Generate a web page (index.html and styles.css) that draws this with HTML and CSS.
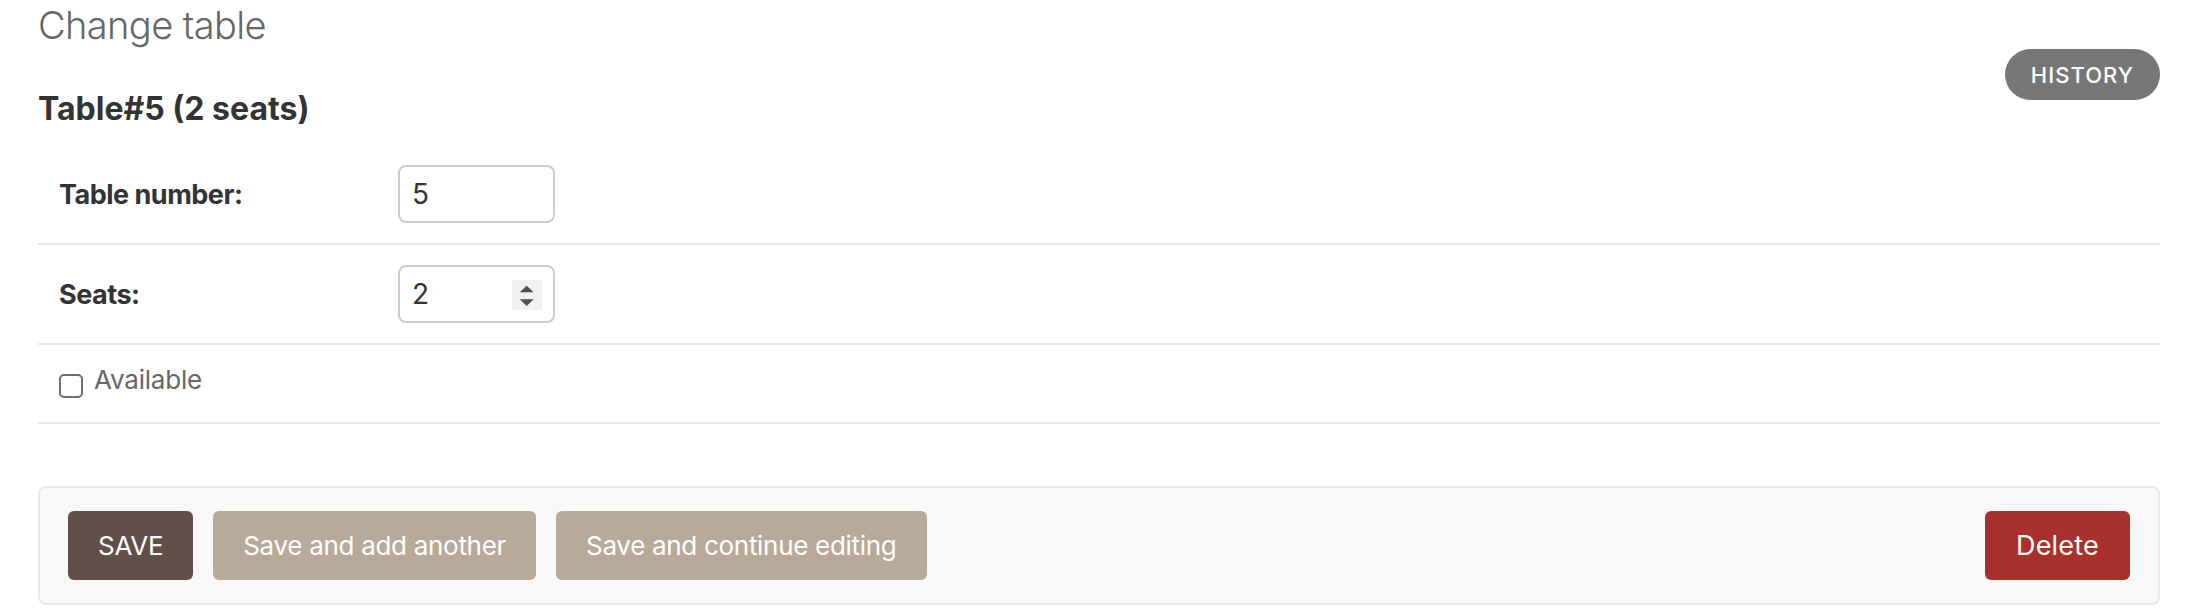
FILE: index.html
```html
<!DOCTYPE html>
<html lang="en">
<head>
<meta charset="utf-8">
<title>Change table</title>
<link rel="stylesheet" href="styles.css">
</head>
<body>
<div class="content">
  <h1 class="page-title">Change table</h1>
  <div class="toolbar">
    <h2 class="object-title">Table#5 (2 seats)</h2>
    <ul class="object-tools">
      <li><a class="history-link" href="#">History</a></li>
    </ul>
  </div>
  <form class="change-form">
    <fieldset class="module">
      <div class="form-row">
        <label class="field-label" for="id_number">Table number:</label>
        <input class="text-input" id="id_number" type="text" value="5">
      </div>
      <div class="form-row">
        <label class="field-label" for="id_seats">Seats:</label>
        <div class="number-input">
          <input class="number-value" id="id_seats" type="text" value="2">
          <span class="spinner">
            <svg width="30" height="30" viewBox="0 0 30 30"><path d="M7.7 12.3 L14.7 5.7 L21.7 12.3 Z" fill="#505050"/><path d="M7.7 19.3 L21.7 19.3 L14.7 25.9 Z" fill="#505050"/></svg>
          </span>
        </div>
      </div>
      <div class="form-row checkbox-row">
        <input class="checkbox" id="id_available" type="checkbox">
        <label class="checkbox-label" for="id_available">Available</label>
      </div>
    </fieldset>
    <div class="submit-row">
      <button class="btn btn-default" type="button">SAVE</button>
      <button class="btn btn-secondary" type="button">Save and add another</button>
      <button class="btn btn-secondary" type="button">Save and continue editing</button>
      <a class="btn btn-delete" href="#">Delete</a>
    </div>
  </form>
</div>
</body>
</html>
```

FILE: styles.css
```css
* { box-sizing: border-box; }

html, body {
  margin: 0;
  padding: 0;
  background: #ffffff;
}

body {
  font-family: Inter, "Noto Sans", "Liberation Sans", sans-serif;
  color: #333333;
}

.content {
  padding: 1px 32px 0 38px;
}

.page-title {
  margin: 0;
  font-size: 38px;
  line-height: 48px;
  font-weight: 300;
  color: #666666;
  letter-spacing: -0.6px;
}

.toolbar {
  display: flex;
  justify-content: space-between;
  align-items: flex-start;
}

.object-title {
  margin: 40px 0 0 0;
  font-size: 32px;
  line-height: 40px;
  font-weight: 700;
  color: #333333;
}

.object-tools {
  list-style: none;
  margin: 0;
  padding: 0;
}

.history-link {
  display: flex;
  align-items: center;
  height: 51px;
  padding: 0 26px;
  border-radius: 26px;
  background: #777777;
  color: #ffffff;
  text-decoration: none;
  text-transform: uppercase;
  font-size: 22px;
  font-weight: 500;
  letter-spacing: 1px;
}

.change-form {
  margin: 16px 0 0 0;
}

.module {
  margin: 0;
  padding: 0;
  border: 0;
}

.form-row {
  display: flex;
  align-items: center;
  padding: 20px 21px;
  border-bottom: 2px solid #e8e8e8;
}

.field-label {
  flex: 0 0 339px;
  font-size: 27px;
  font-weight: 700;
  letter-spacing: -0.5px;
  color: #333333;
}

.text-input,
.number-input {
  width: 157px;
  height: 58px;
  border: 2px solid #cccccc;
  border-radius: 8px;
  background: #ffffff;
}

.text-input {
  padding: 0 12px;
  font-family: inherit;
  font-size: 28px;
  color: #333333;
  outline: none;
}

.number-input {
  display: flex;
  align-items: center;
  padding: 0 11px 0 12px;
}

.number-value {
  flex: 1 1 auto;
  min-width: 0;
  border: 0;
  padding: 0;
  font-family: inherit;
  font-size: 28px;
  color: #333333;
  outline: none;
  background: transparent;
}

.spinner {
  display: flex;
  width: 30px;
  height: 30px;
  margin-top: 2px;
  background: #f0f0f0;
}

.checkbox-row {
  align-items: flex-start;
  min-height: 79px;
}

.checkbox {
  appearance: none;
  -webkit-appearance: none;
  width: 24px;
  height: 24px;
  margin: 9px 0 0 0;
  border: 2px solid #6f6f6f;
  border-radius: 5px;
  background: #ffffff;
}

.checkbox-label {
  margin-left: 11px;
  font-size: 26px;
  line-height: 30px;
  letter-spacing: -0.2px;
  color: #666666;
}

.submit-row {
  display: flex;
  align-items: center;
  gap: 20px;
  margin-top: 62px;
  padding: 23px 28px;
  border: 2px solid #e8e8e8;
  border-radius: 8px;
  background: #f8f8f8;
}

.btn {
  display: flex;
  align-items: center;
  height: 69px;
  padding: 0 30px;
  border: 0;
  border-radius: 6px;
  font-family: inherit;
  font-size: 26px;
  letter-spacing: -0.3px;
  color: #ffffff;
  text-decoration: none;
}

.btn-default {
  background: #634f49;
}

.btn-secondary {
  background: #b8aa9a;
}

.btn-delete {
  margin-left: auto;
  padding: 0 31px;
  font-size: 27px;
  letter-spacing: 0.2px;
  background: #aa312b;
}
```
